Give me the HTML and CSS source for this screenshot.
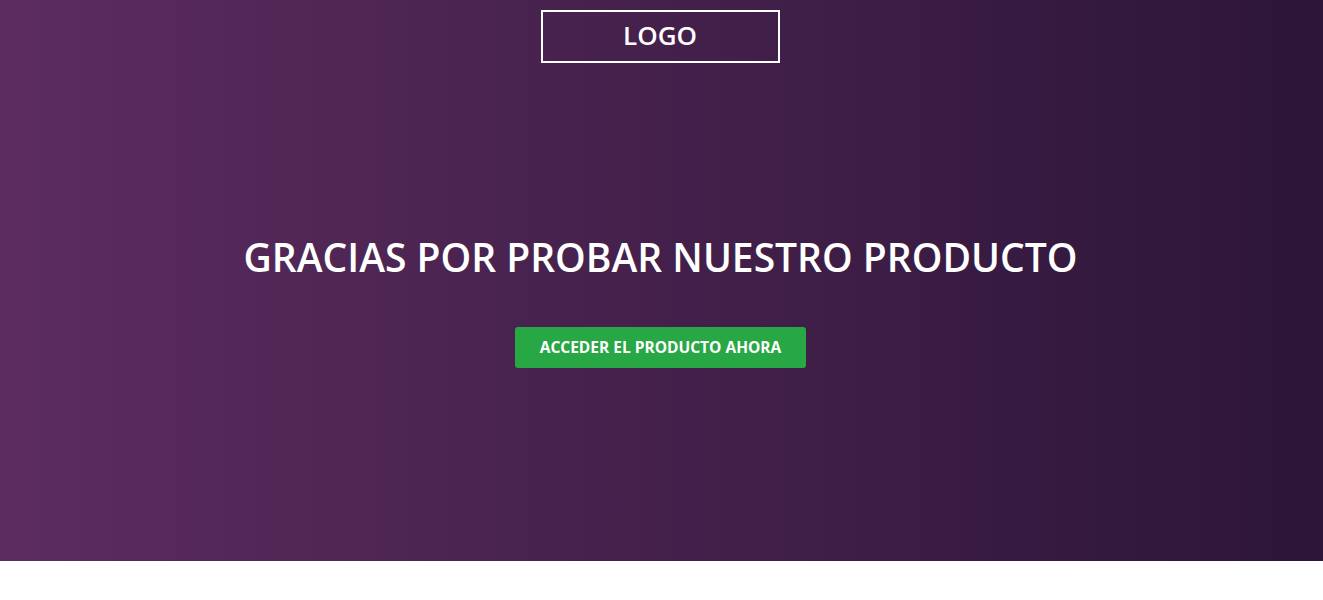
FILE: index.html
```html
<!DOCTYPE html>
<html lang="es">
<head>
<meta charset="utf-8">
<title>Gracias</title>
<link rel="stylesheet" href="styles.css">
</head>
<body>
<section class="hero">
  <header class="top">
    <div class="logo">LOGO</div>
  </header>
  <div class="content">
    <h1 class="title">GRACIAS POR PROBAR NUESTRO PRODUCTO</h1>
    <a class="btn" href="#">ACCEDER EL PRODUCTO AHORA</a>
  </div>
</section>
</body>
</html>
```

FILE: styles.css
```css
* { box-sizing: border-box; }
html, body { margin: 0; padding: 0; background: #fff; }
body { font-family: "Open Sans", "Noto Sans", sans-serif; }
.hero {
  height: 561px;
  background: linear-gradient(to right, #5c2c5f 0%, #2c1538 100%);
  display: flex;
  flex-direction: column;
  align-items: center;
  color: #fff;
}
.top {
  padding-top: 10px;
  display: flex;
  justify-content: center;
  padding-right: 3px;
}
.logo {
  width: 239px;
  height: 53px;
  border: 2px solid #fff;
  display: flex;
  align-items: center;
  justify-content: center;
  font-size: 26px;
  font-weight: 600;
  line-height: 1;
  padding-bottom: 4px;
}
.content {
  display: flex;
  flex-direction: column;
  align-items: center;
  padding-top: 167px;
  padding-right: 2px;
}
.title {
  margin: 0;
  font-size: 39px;
  font-weight: 600;
  line-height: 54px;
  letter-spacing: 0;
}
.btn {
  margin-top: 43px;
  display: inline-block;
  background: #28a745;
  color: #fff;
  text-decoration: none;
  font-size: 15.5px;
  font-weight: 700;
  line-height: 41px;
  height: 41px;
  padding: 0 25px;
  border-radius: 3px;
}
```
